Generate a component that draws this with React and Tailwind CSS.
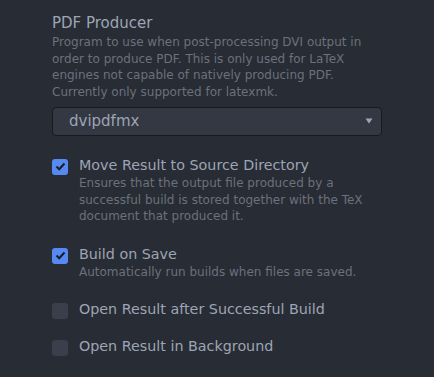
export default function App() {
  const Check = ({ on }) => (
    <div className={`w-4 h-4 rounded-[3px] flex items-center justify-center shrink-0 mt-[3px] ${on ? "bg-[#568af2]" : "bg-[#3a3f4b]"}`}>
      {on && (
        <svg width="11" height="9" viewBox="0 0 11 9">
          <path d="M1.5 4.5 L4.2 7.2 L9.5 1.5" fill="none" stroke="#1b1e23" strokeWidth="2" />
        </svg>
      )}
    </div>
  );
  return (
    <div className="w-[434px] h-[377px] bg-[#282c34] overflow-hidden" style={{ fontFamily: "'DejaVu Sans', sans-serif" }}>
      <div className="pl-[52px] pr-[52px] pt-[14px]">
        <div className="text-[15px] leading-[19px] text-[#9da5b4]">PDF Producer</div>
        <div className="text-[12px] leading-[16.7px] text-[#6b717d] mt-[1px]">
          Program to use when post-processing DVI output in order to produce PDF. This is only used for LaTeX engines not capable of natively producing PDF. Currently only supported for latexmk.
        </div>
        <div className="mt-[6px] h-[29px] w-[330px] rounded-[4px] bg-[#333842] border border-[#181a1f] flex items-center pl-[16px] pr-[8px] text-[15px] text-[#9da5b4]">
          <span className="flex-1">dvipdfmx</span>
          <svg width="8" height="6" viewBox="0 0 8 6"><path d="M0.5 0.5 L7.5 0.5 L4 5.5 Z" fill="#9da5b4" /></svg>
        </div>

        <div className="flex gap-[11px] mt-[20px]">
          <Check on />
          <div>
            <div className="text-[14.3px] leading-[19px] text-[#9da5b4]">Move Result to Source Directory</div>
            <div className="text-[12px] leading-[16.7px] text-[#6b717d]">
              Ensures that the output file produced by a successful build is stored together with the TeX document that produced it.
            </div>
          </div>
        </div>

        <div className="flex gap-[11px] mt-[20px]">
          <Check on />
          <div>
            <div className="text-[14.3px] leading-[19px] text-[#9da5b4]">Build on Save</div>
            <div className="text-[12px] leading-[16.7px] text-[#6b717d]">Automatically run builds when files are saved.</div>
          </div>
        </div>

        <div className="flex gap-[11px] mt-[19px]">
          <Check />
          <div className="text-[14.3px] leading-[19px] text-[#9da5b4]">Open Result after Successful Build</div>
        </div>

        <div className="flex gap-[11px] mt-[18px]">
          <Check />
          <div className="text-[14.3px] leading-[19px] text-[#9da5b4]">Open Result in Background</div>
        </div>
      </div>
    </div>
  );
}
